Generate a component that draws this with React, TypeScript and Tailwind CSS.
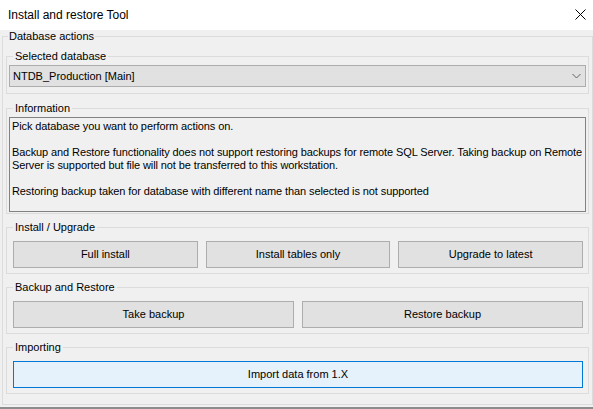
import React from 'react';

const font = { fontFamily: '"Liberation Sans", Arial, sans-serif' };

const Group: React.FC<{ title: string; className?: string; children: React.ReactNode }> = ({ title, className, children }) => (
    <fieldset className={`min-w-0 border border-[#dcdcdc] px-[2px] ${className ?? ''}`}>
        <legend className="ml-[4px] px-[2px] h-[12px] leading-[12px] text-[11px] text-black">{title}</legend>
        {children}
    </fieldset>
);

const WinButton: React.FC<{ label: string; primary?: boolean }> = ({ label, primary }) => (
    <button
        className={`h-[27px] w-full border text-[11px] text-black ${primary ? 'bg-[#e5f1fb] border-[#0078d7]' : 'bg-[#e1e1e1] border-[#adadad]'}`}
    >
        {label}
    </button>
);

export default function App() {
    return (
        <div className="w-[593px] h-[409px] bg-[#f0f0f0] flex flex-col overflow-hidden" style={font}>
            <div className="h-[30px] bg-white flex items-center justify-between pl-[8px] pr-[7px]">
                <span className="text-[12px] text-black">Install and restore Tool</span>
                <svg width="11" height="11" viewBox="0 0 11 11" className="mt-[-1px]">
                    <path d="M0.5 0.5 L10.5 10.5 M10.5 0.5 L0.5 10.5" stroke="#000" strokeWidth="1" fill="none" />
                </svg>
            </div>

            <fieldset className="min-w-0 ml-[2px] w-[591px] border border-[#dcdcdc] px-[3px] pt-[8px] pb-[10px]">
                <legend className="ml-[2px] px-[1px] h-[12px] leading-[12px] text-[11px] text-black">Database actions</legend>

                <Group title="Selected database" className="pt-[3px] pb-[6px]">
                    <div className="h-[22px] bg-[#e1e1e1] border border-[#adadad] flex items-center justify-between pl-[3px] pr-[4px]">
                        <span className="text-[11px] text-black">NTDB_Production [Main]</span>
                        <svg width="9" height="6" viewBox="0 0 9 6">
                            <path d="M0.5 1 L4.5 5 L8.5 1" stroke="#606060" strokeWidth="1" fill="none" />
                        </svg>
                    </div>
                </Group>

                <Group title="Information" className="mt-[8px] pt-[3px] pb-[1px]">
                    <div className="h-[95px] overflow-hidden border border-[#828282] bg-[#f0f0f0] pl-[2px] pt-[2px] text-[11px] leading-[13px] tracking-[-0.1px] text-black whitespace-nowrap">
                        <div>Pick database you want to perform actions on.</div>
                        <div>&nbsp;</div>
                        <div>Backup and Restore functionality does not support restoring backups for remote SQL Server. Taking backup on Remote</div>
                        <div>Server is supported but file will not be transferred to this workstation.</div>
                        <div>&nbsp;</div>
                        <div>Restoring backup taken for database with different name than selected is not supported</div>
                    </div>
                </Group>

                <Group title="Install / Upgrade" className="mt-[7px] pt-[8px] pb-[5px]">
                    <div className="grid grid-cols-3 gap-[8px] pl-[4px] pr-[3px]">
                        <WinButton label="Full install" />
                        <WinButton label="Install tables only" />
                        <WinButton label="Upgrade to latest" />
                    </div>
                </Group>

                <Group title="Backup and Restore" className="mt-[7px] pt-[8px] pb-[5px]">
                    <div className="grid grid-cols-2 gap-[8px] pl-[4px] pr-[3px]">
                        <WinButton label="Take backup" />
                        <WinButton label="Restore backup" />
                    </div>
                </Group>

                <Group title="Importing" className="mt-[7px] pt-[8px] pb-[5px]">
                    <div className="pl-[4px] pr-[3px]">
                        <WinButton label="Import data from 1.X" primary />
                    </div>
                </Group>
            </fieldset>

            <div className="flex-1" />
            <div className="h-[2px] bg-[#8c8c8c]" />
        </div>
    );
}
